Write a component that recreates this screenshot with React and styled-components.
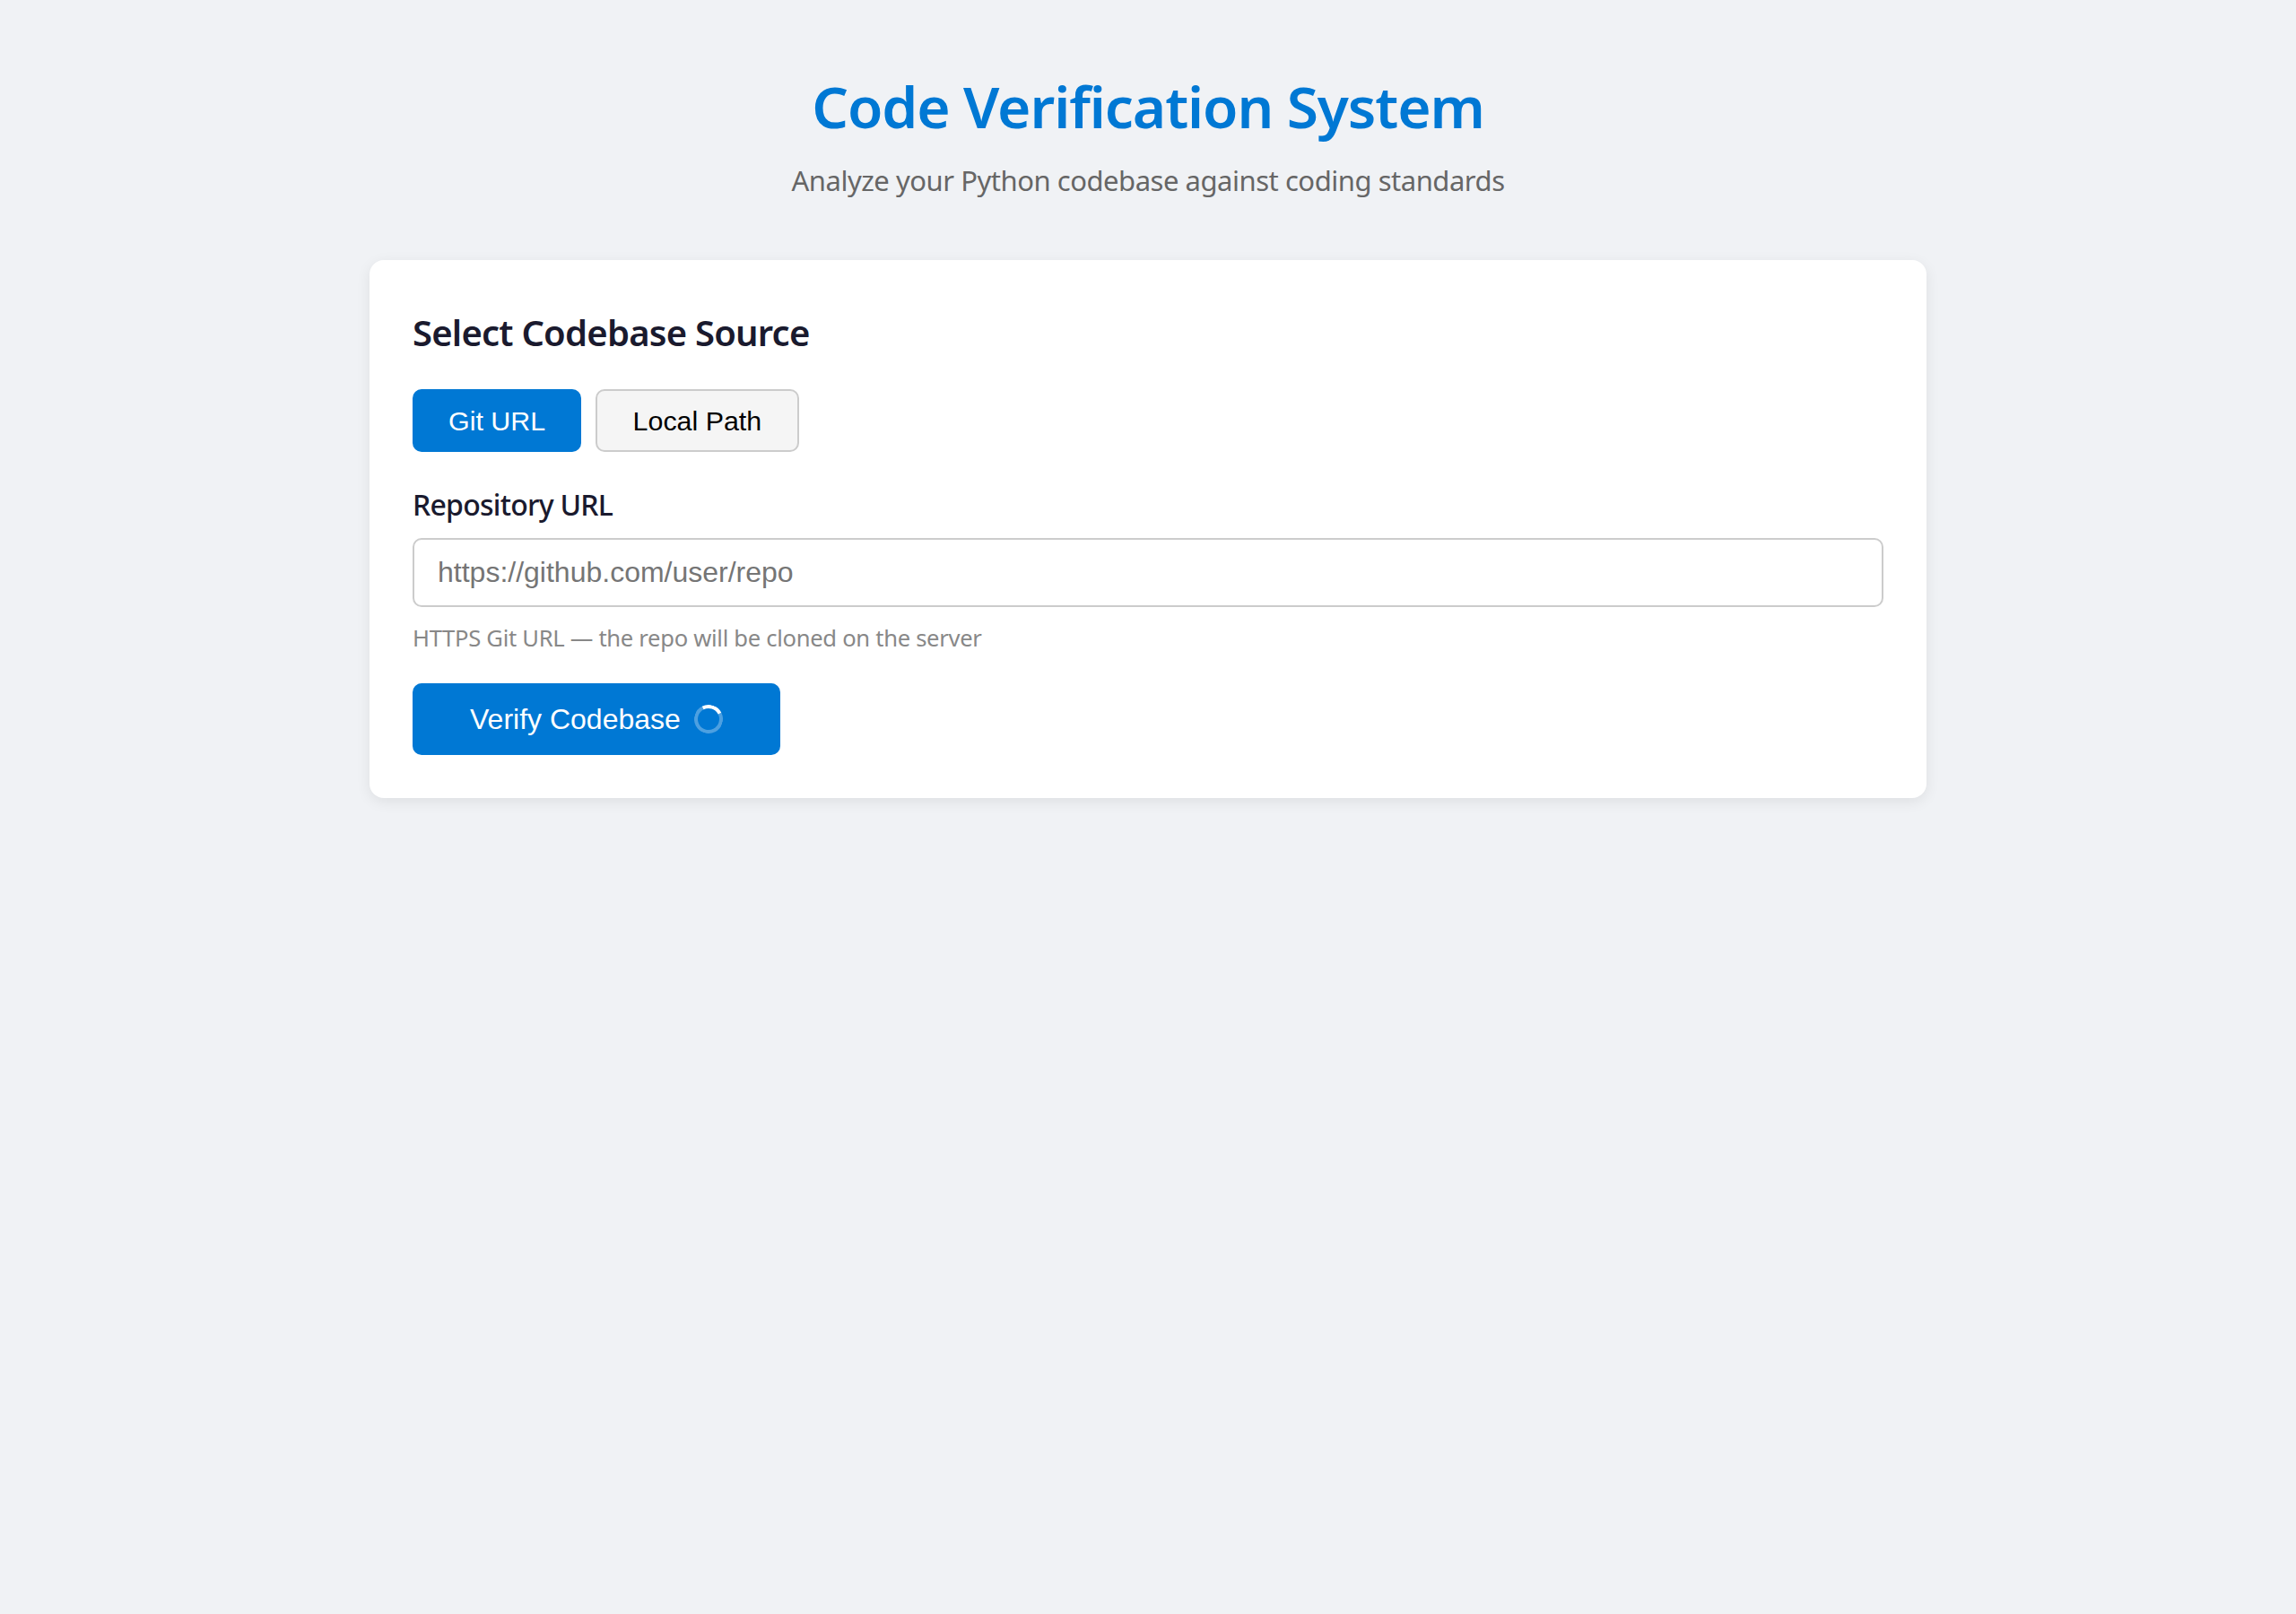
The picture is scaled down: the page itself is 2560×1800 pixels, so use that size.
import React, { useState } from "react";
import styled, { createGlobalStyle } from "styled-components";

const GlobalStyle = createGlobalStyle`
* {
  box-sizing: border-box;
}
body {
  margin: 0;
  background: #f0f2f5;
  font-family: 'Noto Sans', 'Open Sans', sans-serif;
}
`

const Page = styled.div`
min-height: 100vh;
padding-top: 80px;
`

const Header = styled.header`
text-align: center;
margin-bottom: 65px;
`

const Title = styled.h1`
margin: 0;
height: 78px;
font-size: 64px;
line-height: 78px;
font-weight: 600;
letter-spacing: -1.1px;
color: #0078d4;
`

const Subtitle = styled.p`
margin: 19px 0 0;
height: 48px;
font-size: 31px;
line-height: 48px;
letter-spacing: -0.47px;
color: #666;
`

const Card = styled.main`
width: 1736px;
margin: 0 auto;
padding: 53px 48px 48px;
background: #fff;
border-radius: 16px;
box-shadow: 0 4px 16px rgba(0, 0, 0, 0.08);
`

const SectionTitle = styled.h2`
margin: 0 0 35px;
height: 56px;
font-size: 40px;
line-height: 56px;
font-weight: 600;
letter-spacing: -0.78px;
color: #1a1a2e;
`

const Tabs = styled.div`
display: flex;
gap: 16px;
margin-bottom: 34.5px;
`

const Tab = styled.button`
height: 70px;
padding: 0 ${({ $active }) => ($active ? "40px" : "39.5px")};
font-family: 'Liberation Sans', Arial, sans-serif;
font-size: 30.4px;
border-radius: 10px;
border: ${({ $active }) => ($active ? "none" : "2px solid #ccc")};
background: ${({ $active }) => ($active ? "#0078d4" : "#f5f5f5")};
color: ${({ $active }) => ($active ? "#fff" : "#000")};
`

const Field = styled.div`
margin-bottom: 31px;
`

const Label = styled.label`
display: block;
height: 48px;
margin-bottom: 13.5px;
font-size: 32px;
line-height: 48px;
font-weight: 500;
letter-spacing: -0.75px;
color: #1a1a2e;
`

const Input = styled.input`
display: block;
width: 100%;
height: 77px;
padding: 0 26px;
font-family: 'Liberation Sans', Arial, sans-serif;
font-size: 32px;
border: 2px solid #ccc;
border-radius: 10px;
background: #fff;
&::placeholder {
  color: #757575;
  opacity: 1;
}
`

const Hint = styled.div`
margin-top: 16px;
height: 38px;
font-size: 25.6px;
line-height: 38px;
letter-spacing: -0.3px;
color: #888;
`

const Submit = styled.button`
display: flex;
align-items: center;
gap: 15px;
height: 80px;
padding: 0 64px;
font-family: 'Liberation Sans', Arial, sans-serif;
font-size: 32px;
border: none;
border-radius: 10px;
background: #0078d4;
color: #fff;
`

const Spinner = styled.span`
width: 32px;
height: 32px;
border: 4px solid rgba(255, 255, 255, 0.3);
border-top-color: #fff;
border-radius: 50%;
transform: rotate(18deg);
`

function App() {
  const [source, setSource] = useState("git");

  return (
    <Page>
      <GlobalStyle />
      <Header>
        <Title>Code Verification System</Title>
        <Subtitle>Analyze your Python codebase against coding standards</Subtitle>
      </Header>

      <Card>
        <SectionTitle>Select Codebase Source</SectionTitle>
        <Tabs>
          <Tab $active={source === "git"} onClick={() => setSource("git")}>Git URL</Tab>
          <Tab $active={source === "local"} onClick={() => setSource("local")}>Local Path</Tab>
        </Tabs>
        <Field>
          <Label htmlFor="repo">Repository URL</Label>
          <Input id="repo" type="text" placeholder="https://github.com/user/repo" />
          <Hint>HTTPS Git URL — the repo will be cloned on the server</Hint>
        </Field>
        <Submit>
          Verify Codebase
          <Spinner />
        </Submit>
      </Card>
    </Page>
  )
}

export default App;
